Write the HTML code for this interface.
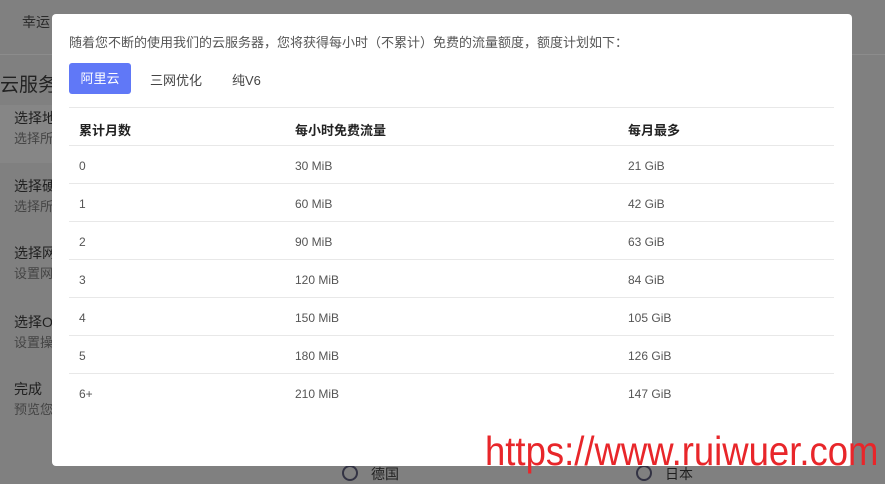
<!DOCTYPE html>
<html><head><meta charset="utf-8"><style>
*{margin:0;padding:0;box-sizing:border-box}
body{width:885px;height:481px;overflow:hidden;background:#808080;font-family:"Liberation Sans","Noto Sans CJK SC",sans-serif;position:relative}
.a{position:absolute;white-space:nowrap}
.bg{color:#1f1f1f}
.modal{position:absolute;left:52px;top:14px;width:800px;height:452px;background:#fff;border-radius:4px}
.row{position:absolute;left:17px;width:765px;height:38px;border-top:1px solid #e8e8e8;font-size:12px;color:#555}
.row span{position:absolute;top:13px}
.c1{left:10px}.c2{left:226px}.c3{left:559px}
.hd{color:#222;font-weight:bold;font-size:13px}
</style></head><body>
<div class="a" style="left:0;top:54px;width:885px;height:1px;background:#8c8c8c"></div>
<div class="a bg" style="left:22px;top:12px;font-size:14px;color:#2a2a2a">幸运</div>
<div class="a bg" style="left:0;top:70px;font-size:19px;color:#222">云服务器</div>
<div class="a" style="left:0;top:105px;width:52px;height:58px;background:#868686"></div>
<div class="a bg" style="left:14px;top:108px;font-size:14px">选择地</div>
<div class="a" style="left:14px;top:128px;font-size:13px;color:#444">选择所</div>
<div class="a bg" style="left:14px;top:176px;font-size:14px">选择硬</div>
<div class="a" style="left:14px;top:196px;font-size:13px;color:#444">选择所</div>
<div class="a bg" style="left:14px;top:243px;font-size:14px">选择网</div>
<div class="a" style="left:14px;top:263px;font-size:13px;color:#444">设置网</div>
<div class="a bg" style="left:14px;top:312px;font-size:14px">选择O</div>
<div class="a" style="left:14px;top:332px;font-size:13px;color:#444">设置操</div>
<div class="a bg" style="left:14px;top:379px;font-size:14px">完成</div>
<div class="a" style="left:14px;top:399px;font-size:13px;color:#444">预览您</div>
<div class="a" style="left:342px;top:465px;width:16px;height:16px;border:2px solid #334;border-radius:50%"></div>
<div class="a bg" style="left:371px;top:464px;font-size:14px">德国</div>
<div class="a" style="left:636px;top:465px;width:16px;height:16px;border:2px solid #334;border-radius:50%"></div>
<div class="a bg" style="left:665px;top:464px;font-size:14px">日本</div>
<div class="modal">
<div class="a" style="left:17px;top:18px;font-size:13px;color:#555">随着您不断的使用我们的云服务器，您将获得每小时（不累计）免费的流量额度，额度计划如下：</div>
<div class="a" style="left:17px;top:49px;width:62px;height:31px;background:#6078f7;border-radius:3px;color:#fff;font-size:13px;text-align:center;line-height:31px">阿里云</div>
<div class="a" style="left:98px;top:56px;font-size:13px;color:#444">三网优化</div>
<div class="a" style="left:180px;top:56px;font-size:13px;color:#444">纯V6</div>
<div class="row hd" style="top:93px"><span class="c1" style="top:12px">累计月数</span><span class="c2" style="top:12px">每小时免费流量</span><span class="c3" style="top:12px">每月最多</span></div>
<div class="row" style="top:131px"><span class="c1">0</span><span class="c2">30 MiB</span><span class="c3">21 GiB</span></div>
<div class="row" style="top:169px"><span class="c1">1</span><span class="c2">60 MiB</span><span class="c3">42 GiB</span></div>
<div class="row" style="top:207px"><span class="c1">2</span><span class="c2">90 MiB</span><span class="c3">63 GiB</span></div>
<div class="row" style="top:245px"><span class="c1">3</span><span class="c2">120 MiB</span><span class="c3">84 GiB</span></div>
<div class="row" style="top:283px"><span class="c1">4</span><span class="c2">150 MiB</span><span class="c3">105 GiB</span></div>
<div class="row" style="top:321px"><span class="c1">5</span><span class="c2">180 MiB</span><span class="c3">126 GiB</span></div>
<div class="row" style="top:359px"><span class="c1">6+</span><span class="c2">210 MiB</span><span class="c3">147 GiB</span></div>
</div>
<div class="a" style="left:485px;top:428px;font-size:41px;color:#e8262a;font-family:'Liberation Sans Narrow','Liberation Sans',sans-serif;transform:scaleX(0.89);transform-origin:left top">https://www.ruiwuer.com</div>
</body></html>
